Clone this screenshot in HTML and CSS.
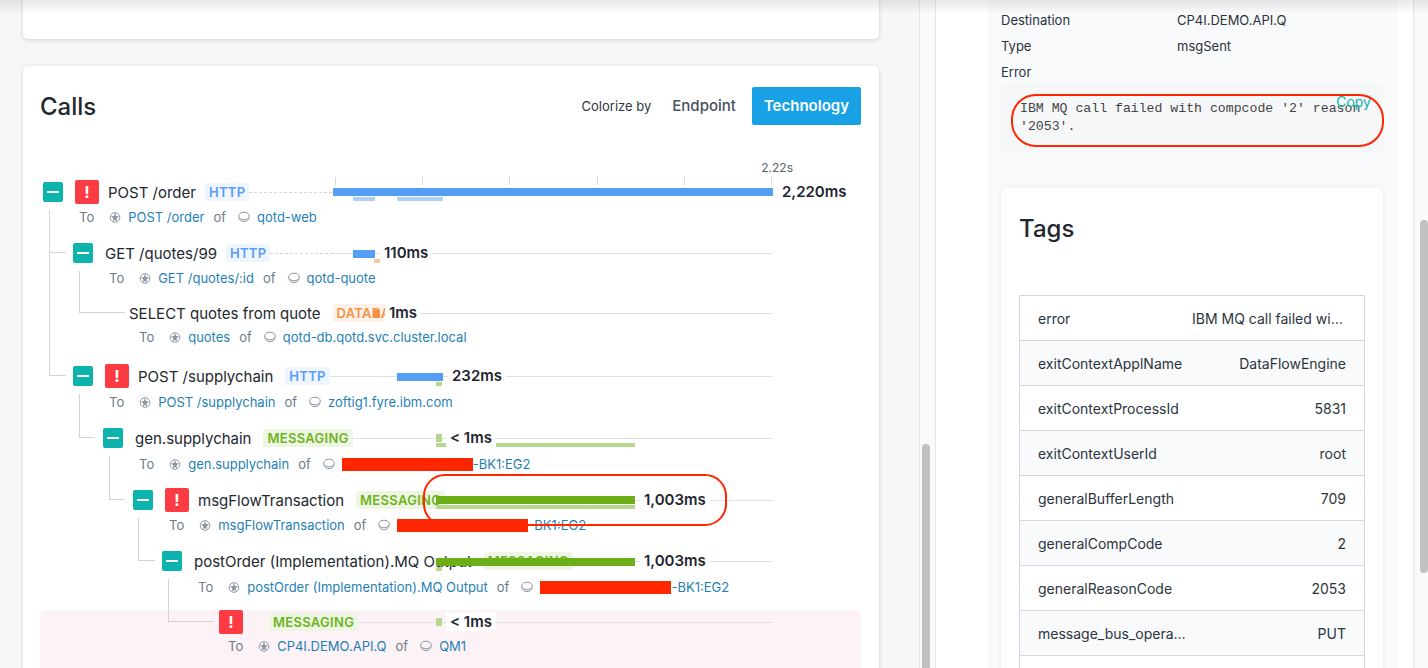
FILE: index.html
```html
<!DOCTYPE html>
<html>
  <head>
    <title>Call details</title>
    <link rel="stylesheet" href="styles.css">
  </head>
  <body>
    <svg class="defs" width="0" height="0">
      <symbol id="ico-endpoint" viewBox="0 0 12 12">
        <circle cx="6" cy="6.5" r="4.8" fill="none" stroke="#8d97a3" stroke-width="1"/>
        <path d="M6 1.5 7 5 10 5.5 7.6 7.5 8.2 10.5 6 9 3.8 10.5 4.4 7.5 2 5.5 5 5Z" fill="#8d97a3"/>
      </symbol>
      <symbol id="ico-service" viewBox="0 0 12 12">
        <ellipse cx="6" cy="5" rx="5.3" ry="3.8" fill="none" stroke="#8d97a3" stroke-width="1"/>
        <path d="M.9 6.5C1.4 9.4 3.5 10.6 6 10.6S10.6 9.4 11.1 6.5" fill="none" stroke="#8d97a3" stroke-width="1"/>
      </symbol>
    </svg>

    <div class="top-shade"></div>

    <div class="page">
      <div class="main">
        <div class="card card-stub"></div>

        <div class="card calls">
          <div class="calls-header">
            <h2>Calls</h2>
            <div class="colorize">
              <span class="colorize-label">Colorize by</span>
              <span class="colorize-btn">Endpoint</span>
              <span class="colorize-btn active">Technology</span>
            </div>
          </div>

          <div class="axis">
            <div class="axis-label">2.22s</div>
            <div class="axis-ticks"><i></i><i></i><i></i><i></i><i></i><i></i></div>
          </div>

          <div class="tree">
            <div class="call d1">
              <div class="call-head">
                <span class="toggle"></span>
                <span class="err">!</span>
                <span class="title">POST /order</span>
                <span class="badge http">HTTP</span>
                <span class="rail-dash grow"></span>
              </div>
              <div class="call-sub">
                <span class="muted">To</span>
                <svg class="ico ico-a"><use href="#ico-endpoint"/></svg>
                <a class="link">POST /order</a>
                <span class="muted of">of</span>
                <svg class="ico ico-b"><use href="#ico-service"/></svg>
                <a class="link">qotd-web</a>
              </div>
              <span class="bar http-bar" style="left:293px;width:440px"></span>
              <span class="bar-child http-child" style="left:313px;width:22px"></span>
              <span class="bar-child http-child" style="left:357px;width:46px"></span>
              <span class="dur" style="left:738px">2,220ms</span>
            </div>

            <div class="call d2 low">
              <span class="elbow" style="left:9px;top:-31px;width:17px;height:43px"></span>
              <div class="call-head">
                <span class="toggle"></span>
                <span class="title">GET /quotes/99</span>
                <span class="badge http">HTTP</span>
                <span class="rail-dash short"></span>
                <span class="rail"></span>
              </div>
              <div class="call-sub">
                <span class="muted">To</span>
                <svg class="ico ico-a"><use href="#ico-endpoint"/></svg>
                <a class="link">GET /quotes/:id</a>
                <span class="muted of">of</span>
                <svg class="ico ico-b"><use href="#ico-service"/></svg>
                <a class="link">qotd-quote</a>
              </div>
              <span class="bar http-bar" style="left:313px;width:22px"></span>
              <span class="bar-child db-child" style="left:334px;width:6px"></span>
              <span class="dur" style="left:340px">110ms</span>
            </div>

            <div class="call d3 low">
              <span class="elbow" style="left:39px;top:-30px;width:46px;height:42px"></span>
              <div class="call-head fit">
                <span class="title">SELECT quotes from quote</span>
                <span class="badge db">DATABASE</span>
                <span class="rail"></span>
              </div>
              <div class="call-sub tight">
                <span class="muted">To</span>
                <svg class="ico ico-a"><use href="#ico-endpoint"/></svg>
                <a class="link">quotes</a>
                <span class="muted of">of</span>
                <svg class="ico ico-b"><use href="#ico-service"/></svg>
                <a class="link">qotd-db.qotd.svc.cluster.local</a>
              </div>
              <span class="bar db-bar" style="left:334px;width:6px"></span>
              <span class="dur" style="left:345px">1ms</span>
            </div>

            <div class="call d2 low">
              <span class="elbow" style="left:9px;top:-154px;width:17px;height:166px"></span>
              <div class="call-head fit">
                <span class="toggle"></span>
                <span class="err">!</span>
                <span class="title">POST /supplychain</span>
                <span class="badge http">HTTP</span>
                <span class="rail"></span>
              </div>
              <div class="call-sub loose">
                <span class="muted">To</span>
                <svg class="ico ico-a"><use href="#ico-endpoint"/></svg>
                <a class="link">POST /supplychain</a>
                <span class="muted of">of</span>
                <svg class="ico ico-b"><use href="#ico-service"/></svg>
                <a class="link">zoftig1.fyre.ibm.com</a>
              </div>
              <span class="bar http-bar" style="left:357px;width:46px"></span>
              <span class="bar-child msg-child" style="left:396px;width:6px"></span>
              <span class="dur" style="left:408px">232ms</span>
            </div>

            <div class="call d4">
              <span class="elbow" style="left:39px;top:-32px;width:16px;height:44px"></span>
              <div class="call-head fit">
                <span class="toggle"></span>
                <span class="title">gen.supplychain</span>
                <span class="badge msg">MESSAGING</span>
                <span class="rail"></span>
              </div>
              <div class="call-sub loose">
                <span class="muted">To</span>
                <svg class="ico ico-a"><use href="#ico-endpoint"/></svg>
                <a class="link">gen.supplychain</a>
                <span class="muted of">of</span>
                <svg class="ico ico-b"><use href="#ico-service"/></svg>
                <span class="redact"></span><a class="link">-BK1:EG2</a>
              </div>
              <span class="bar msg-light" style="left:396px;width:6px"></span>
              <span class="bar-child msg-child" style="left:396px;width:199px"></span>
              <span class="dur" style="left:406px">&lt; 1ms</span>
            </div>

            <div class="call d5">
              <span class="elbow" style="left:69px;top:-32px;width:16px;height:44px"></span>
              <div class="call-head fit">
                <span class="toggle"></span>
                <span class="err">!</span>
                <span class="title">msgFlowTransaction</span>
                <span class="badge msg">MESSAGING</span>
                <span class="rail"></span>
              </div>
              <div class="call-sub">
                <span class="muted">To</span>
                <svg class="ico ico-a"><use href="#ico-endpoint"/></svg>
                <a class="link">msgFlowTransaction</a>
                <span class="muted of">of</span>
                <svg class="ico ico-b"><use href="#ico-service"/></svg>
                <span class="redact"></span><a class="link">-BK1:EG2</a>
              </div>
              <span class="bar msg-bar" style="left:396px;width:199px"></span>
              <span class="bar-child msg-child" style="left:396px;width:199px"></span>
              <span class="dur" style="left:600px">1,003ms</span>
              <span class="circled"></span>
            </div>

            <div class="call d6 low">
              <span class="elbow" style="left:98px;top:-31px;width:17px;height:43px"></span>
              <div class="call-head fit">
                <span class="toggle"></span>
                <span class="title">postOrder (Implementation).MQ Output</span>
                <span class="badge msg">MESSAGING</span>
                <span class="rail"></span>
              </div>
              <div class="call-sub loose">
                <span class="muted">To</span>
                <svg class="ico ico-a"><use href="#ico-endpoint"/></svg>
                <a class="link">postOrder (Implementation).MQ Output</a>
                <span class="muted of">of</span>
                <svg class="ico ico-b"><use href="#ico-service"/></svg>
                <span class="redact"></span><a class="link">-BK1:EG2</a>
              </div>
              <span class="bar msg-bar" style="left:396px;width:199px"></span>
              <span class="bar-child msg-child" style="left:396px;width:6px"></span>
              <span class="dur" style="left:600px">1,003ms</span>
            </div>

            <div class="call d7 failed">
              <span class="elbow" style="left:128px;top:-31px;width:46px;height:43px"></span>
              <div class="call-head">
                <span class="err">!</span>
                <span class="badge msg solo">MESSAGING</span>
                <span class="rail"></span>
              </div>
              <div class="call-sub tight">
                <span class="muted">To</span>
                <svg class="ico ico-a"><use href="#ico-endpoint"/></svg>
                <a class="link">CP4I.DEMO.API.Q</a>
                <span class="muted of">of</span>
                <svg class="ico ico-b"><use href="#ico-service"/></svg>
                <a class="link">QM1</a>
              </div>
              <span class="bar msg-light" style="left:396px;width:6px"></span>
              <span class="dur" style="left:406px">&lt; 1ms</span>
            </div>
          </div>
        </div>
      </div>

      <div class="track"><div class="thumb thumb-main"></div></div>

      <div class="drawer">
        <div class="panel">
          <div class="field"><span class="field-key">Destination</span><span>CP4I.DEMO.API.Q</span></div>
          <div class="field"><span class="field-key">Type</span><span>msgSent</span></div>
          <div class="field field-last"><span class="field-key">Error</span></div>
          <div class="error-box">
            <pre>IBM MQ call failed with compcode '2' reason '2053'.</pre>
            <span class="copy">Copy</span>
            <span class="circled-error"></span>
          </div>

          <div class="card tags">
            <h2>Tags</h2>
            <div class="tag-table">
              <div class="tag-row"><span class="tag-key">error</span><span class="tag-val wide">IBM MQ call failed with compcode '2' reason '2053'.</span></div>
              <div class="tag-row"><span class="tag-key">exitContextApplName</span><span class="tag-val">DataFlowEngine</span></div>
              <div class="tag-row"><span class="tag-key">exitContextProcessId</span><span class="tag-val">5831</span></div>
              <div class="tag-row"><span class="tag-key">exitContextUserId</span><span class="tag-val">root</span></div>
              <div class="tag-row"><span class="tag-key">generalBufferLength</span><span class="tag-val">709</span></div>
              <div class="tag-row"><span class="tag-key">generalCompCode</span><span class="tag-val">2</span></div>
              <div class="tag-row"><span class="tag-key">generalReasonCode</span><span class="tag-val">2053</span></div>
              <div class="tag-row"><span class="tag-key">message_bus_operation</span><span class="tag-val">PUT</span></div>
              <div class="tag-row"></div>
            </div>
          </div>
        </div>
      </div>

      <div class="track"><div class="thumb thumb-drawer"></div></div>
    </div>
  </body>
</html>
```

FILE: styles.css
```css
html, body {
  margin: 0;
  height: 668px;
  overflow: hidden;
}

body {
  font-family: Inter, "Noto Sans", sans-serif;
  color: #1f2630;
  background: #f6f7f9;
}

.defs {
  position: absolute;
}

.top-shade {
  position: absolute;
  top: 0;
  left: 0;
  right: 0;
  height: 14px;
  z-index: 5;
  background: linear-gradient(rgba(0, 0, 0, 0.09), rgba(0, 0, 0, 0));
  pointer-events: none;
}

.page {
  display: flex;
  height: 668px;
}

.main {
  flex: 0 0 919px;
  box-sizing: border-box;
  padding: 0 40px 0 23px;
}

.card {
  background: #fff;
  border-radius: 5px;
  box-shadow: 0 1px 4px rgba(0, 0, 0, 0.16);
}

.card-stub {
  height: 39px;
  border-radius: 0 0 5px 5px;
}

.calls {
  margin-top: 27px;
  height: 640px;
  padding: 21px 18px 0 17px;
}

.calls-header {
  display: flex;
  justify-content: space-between;
  align-items: center;
  height: 38px;
}

h2 {
  margin: 0;
  font-size: 24px;
  font-weight: 500;
  color: #22272e;
}

.colorize {
  display: flex;
  align-items: center;
  height: 38px;
  gap: 4px;
}

.colorize-label {
  font-size: 13px;
  color: #2f3640;
  margin-right: 5px;
}

.colorize-btn {
  padding: 0 12px;
  line-height: 38px;
  font-size: 15px;
  font-weight: 500;
  color: #47525f;
  border-radius: 2px;
}

.colorize-btn.active {
  background: #19a1e6;
  color: #fff;
  font-weight: 600;
}

/* time axis */
.axis {
  height: 60px;
  margin-left: 295px;
  width: 437px;
  display: flex;
  flex-direction: column;
  justify-content: flex-end;
}

.axis-label {
  text-align: right;
  margin-right: -21px;
  font-size: 12px;
  line-height: 16px;
  color: #5a6470;
  margin-bottom: 1px;
}

.axis-ticks {
  display: flex;
  justify-content: space-between;
  height: 8px;
}

.axis-ticks i {
  width: 1px;
  background: #d4d6d9;
}

/* call tree */
.tree {
  margin-top: -5px;
}

.call {
  position: relative;
  height: 61px;
}

.call:nth-child(2) { height: 60px; }
.call:nth-child(3) { height: 63px; }
.call:nth-child(4),
.call:nth-child(5) { height: 62px; }

.failed {
  height: 70px;
  background: #fdf2f6;
  border-radius: 6px 6px 0 0;
}

.elbow {
  position: absolute;
  box-sizing: border-box;
  border-left: 1px solid #cfd4d8;
  border-bottom: 1px solid #cfd4d8;
}

.call-head {
  position: relative;
  display: flex;
  align-items: center;
  box-sizing: border-box;
  width: 733px;
  height: 24px;
}

.d1 .call-head { padding-left: 3px; }
.d2 .call-head { padding-left: 33px; }
.d3 .call-head { padding-left: 89px; }
.d4 .call-head { padding-left: 63px; }
.d5 .call-head { padding-left: 93px; }
.d6 .call-head { padding-left: 122px; }
.d7 .call-head { padding-left: 179px; }

.d1 .call-sub { padding-left: 39px; }
.d2 .call-sub { padding-left: 69px; }
.d3 .call-sub { padding-left: 99px; }
.d4 .call-sub { padding-left: 99px; }
.d5 .call-sub { padding-left: 129px; }
.d6 .call-sub { padding-left: 158px; }
.d7 .call-sub { padding-left: 188px; }

.toggle {
  position: relative;
  flex: none;
  width: 20px;
  height: 20px;
  margin-right: 12px;
  background: #0db4ae;
  border-radius: 2px;
}

.toggle::after {
  content: "";
  position: absolute;
  left: 4px;
  top: 9px;
  width: 12px;
  height: 2px;
  background: #fff;
}

.err {
  flex: none;
  width: 24px;
  height: 24px;
  margin-right: 9px;
  background: #fc3c42;
  border-radius: 2px;
  color: #fff;
  font-size: 16px;
  font-weight: 700;
  line-height: 24px;
  text-align: center;
}

.title {
  font-size: 15px;
  color: #22272e;
  white-space: nowrap;
  margin-right: 9px;
}

.fit .title {
  flex: 0 1 auto;
  min-width: 0;
  overflow: hidden;
  text-overflow: ellipsis;
  margin-right: 12px;
}

.fit .badge {
  flex: none;
}

.fit {
  width: 733px;
}

.badge {
  flex: none;
  box-sizing: border-box;
  height: 18px;
  padding: 0 4px;
  border-radius: 3px;
  font-size: 13px;
  font-weight: 600;
  line-height: 18px;
  letter-spacing: 0.3px;
}

.http { background: #eef5ff; color: #5a9cf7; }
.db { background: #fdf1e8; color: #f2934a; }
.msg { background: #edf6e3; color: #6fb31c; }

.solo {
  margin-left: 17px;
}

.rail, .rail-dash {
  height: 0;
}

.rail {
  flex: 1;
  border-top: 1px solid #dbe2e8;
}

.rail-dash {
  border-top: 1px dashed #d4d8dc;
}

.rail-dash.grow { flex: 1; }
.rail-dash.short { flex: 0 0 63px; }

.bar, .bar-child {
  position: absolute;
}

.bar {
  top: 8px;
  height: 8px;
}

.bar-child {
  top: 17px;
  height: 4px;
}

.low .bar { top: 9px; }
.low .bar-child { top: 18px; }

.http-bar { background: #559ef5; }
.http-child { background: #add0fa; }
.db-bar { background: #f29148; }
.db-child { background: #f7c8a8; }
.msg-bar { background: #6cae17; }
.msg-light, .msg-child { background: #b5d88c; }

.dur {
  position: absolute;
  top: 3px;
  padding: 0 4px;
  background: #fff;
  font-size: 15px;
  font-weight: 600;
  line-height: 18px;
  white-space: nowrap;
  color: #1f2630;
}

.call-sub {
  display: flex;
  align-items: center;
  height: 16px;
  margin-top: 5px;
  font-size: 13px;
  white-space: nowrap;
}

.call-sub.tight { margin-top: 4px; }
.call-sub.loose { margin-top: 6px; }

.muted {
  color: #6d7a88;
}

.link {
  color: #1f7fb5;
}

.ico {
  flex: none;
  width: 12px;
  height: 12px;
}

.ico-a { margin: 0 7px 0 15px; }
.ico-b { margin: 0 7px 0 12px; }
.of { margin-left: 9px; }

.redact {
  flex: none;
  width: 131px;
  height: 13px;
  background: #ff2600;
}

.circled {
  position: absolute;
  left: 383px;
  top: -14px;
  width: 304px;
  height: 52px;
  box-sizing: border-box;
  border: 2.5px solid #ff2600;
  border-radius: 22px;
  z-index: 3;
}

/* scrollbars */
.track {
  flex: none;
  box-sizing: border-box;
  background: #fafafa;
  border-left: 1px solid #e6e6e6;
}

.main + .track {
  width: 16px;
  padding-left: 2px;
}

.drawer + .track {
  width: 15px;
  padding-left: 6px;
}

.thumb {
  width: 8px;
  background: #c1c1c1;
  border-radius: 4px;
}

.thumb-main {
  margin-top: 444px;
  height: 260px;
}

.thumb-drawer {
  margin-top: 220px;
  height: 353px;
}

/* side drawer */
.drawer {
  flex: none;
  box-sizing: border-box;
  width: 478px;
  padding-left: 52px;
  background: #fff;
  border-left: 1px solid #e6e6e6;
}

.panel {
  box-sizing: border-box;
  width: 409px;
  height: 668px;
  padding: 9px 13px 0;
  background: #f9fafc;
}

.field {
  display: flex;
  height: 22px;
  margin-bottom: 4px;
  font-size: 13px;
  line-height: 22px;
  color: #2b323b;
}

.field-last {
  margin-bottom: 0;
}

.field-key {
  flex: 0 0 176px;
}

.error-box {
  position: relative;
  width: 382px;
  box-sizing: border-box;
  padding: 17px 19px 16px;
  background: #f6f7f9;
}

.error-box pre {
  margin: 0;
  font-family: "Liberation Mono", monospace;
  font-size: 13.2px;
  line-height: 18px;
  color: #444;
  white-space: pre-wrap;
}

.copy {
  position: absolute;
  right: 12px;
  top: 10px;
  font-size: 14px;
  color: #0db4ae;
}

.circled-error {
  position: absolute;
  left: 10px;
  top: 11px;
  width: 373px;
  height: 53px;
  box-sizing: border-box;
  border: 2.5px solid #ff2600;
  border-radius: 25px;
}

.tags {
  width: 382px;
  height: 600px;
  box-sizing: border-box;
  margin-top: 36px;
  padding: 26px 18px 0;
  box-shadow: 0 1px 6px rgba(0, 0, 0, 0.08);
}

.tags h2 {
  line-height: 30px;
  margin-bottom: 51px;
}

.tag-table {
  border: 1px solid #d5d8dc;
  border-bottom: none;
  width: 346px;
  box-sizing: border-box;
}

.tag-row {
  display: flex;
  justify-content: space-between;
  align-items: center;
  box-sizing: border-box;
  height: 45px;
  padding: 0 18px;
  border-bottom: 1px solid #d5d8dc;
  font-size: 14px;
  color: #2b3440;
}

.tag-row:nth-child(even) {
  background: #f9fafc;
}

.tag-key, .tag-val {
  white-space: nowrap;
  overflow: hidden;
  text-overflow: ellipsis;
}

.tag-key {
  max-width: 152px;
}

.tag-val {
  max-width: 154px;
}

.tag-val.wide {
  width: 154px;
}
```
